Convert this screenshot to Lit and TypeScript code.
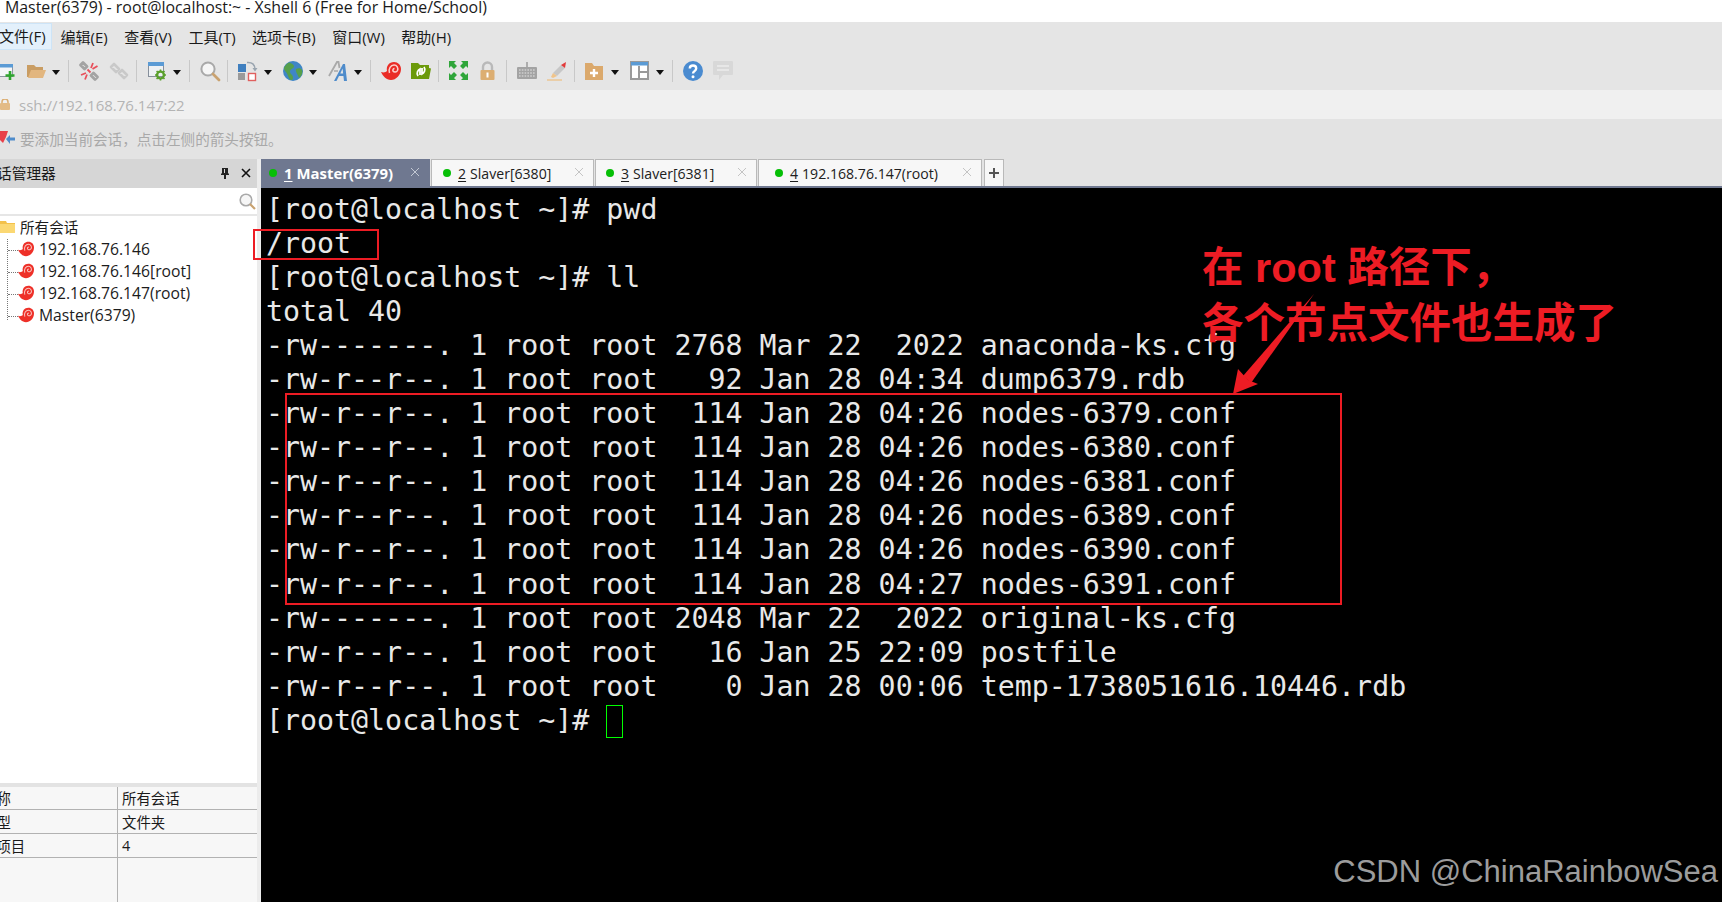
import { LitElement, html, css, svg } from "lit";
import { customElement } from "lit/decorators.js";

const SHELL_BODY = "M0 11c3 1 5 0 6-1C5 5 8 1 13 1c4 0 7 3 7 7 0 6-5 11-10 11C5 19 2 15 0 11z";
const SHELL_SPIRAL = "M8.500 12C7 7.500 10 4 13 4c3 0 4.500 3 3.500 5.500-1 2-3.500 2-4.500.5-.6-1.200.3-2.500 1.500-2.500";

const shellIcon = (size: number) => html`<svg width=${size} height=${size} viewBox="0 0 20 20">
  <path d=${SHELL_BODY} fill="#ee3028"/>
  <path d=${SHELL_SPIRAL} fill="none" stroke="#f9c5c0" stroke-width="1.300"/>
</svg>`;

const ICONS: Record<string, unknown> = {
  new: svg`<rect x="1.500" y="3.500" width="15" height="12" fill="#f4f6f8" stroke="#8d96a3"/><rect x="1" y="3" width="16" height="3.500" fill="#5b9bd5"/><path d="M14 10v9M9.500 14.500h9" stroke="#2fa52f" stroke-width="2.600"/>`,
  folder: svg`<path d="M1 4h7l2 2h7v3H6L4 16H1z" fill="#c99d63"/><path d="M5 9h15l-3 8H2z" fill="#e2b67f"/>`,
  broken: svg`<g fill="none" stroke="#a3a3a3" stroke-width="2.800" stroke-linejoin="round"><path d="M1.500 4l2.500-2.500 4 4L5.500 8z"/><path d="M12 14.500l2.500-2.500 4 4-2.500 2.500z"/></g><g stroke="#e8505b" stroke-width="1.800"><path d="M8.500 8.500l3 3M12 7l2-5M13.500 8l5-3M7 12l-5 2M8 13.500l-2 5"/></g>`,
  link: svg`<g fill="none" stroke="#c9c9c9" stroke-width="2.600" stroke-linejoin="round"><path d="M2 6l3-3 5 5-3 3z"/><path d="M10 12l3-3 5 5-3 3z"/></g>`,
  props: svg`<rect x="1.500" y="1.500" width="15" height="14" fill="#eef1f4" stroke="#868f9b"/><rect x="1" y="1" width="16" height="4" fill="#5b9bd5"/><circle cx="13.500" cy="14" r="3.400" fill="none" stroke="#5aa02c" stroke-width="2.400"/><path d="M13.500 8.500v2M13.500 17.500v2M8 14h2M17 14h2M9.600 10l1.500 1.500M16 16.500l1.500 1.500M9.600 18l1.500-1.500M16 11.500l1.500-1.500" stroke="#5aa02c" stroke-width="1.600"/>`,
  search: svg`<circle cx="8" cy="8" r="6.600" fill="#f6f6f6" stroke="#a9a9a9" stroke-width="2"/><path d="M13 13l6 6" stroke="#c9a270" stroke-width="2.800" stroke-linecap="round"/>`,
  arrange: svg`<rect x="0" y="3" width="8" height="8" fill="#3f7fbf"/><rect x="0" y="12" width="7" height="7" fill="#9a9a9a"/><rect x="10.500" y="12.500" width="7" height="7" fill="#fff" stroke="#e0605e" stroke-width="1.400"/><path d="M9 1.500c5-.5 8 2 8 7" fill="none" stroke="#9aa5b0" stroke-width="1.600"/><path d="M14.500 7l2.500 3.500L19.500 7z" fill="#9aa5b0"/>`,
  globe: svg`<circle cx="10" cy="10" r="10" fill="#3f86c6"/><path d="M6 1.500c3 1 5 2 5 4s-4 2-4 5 3 3 3 6-2 3-3 2-2-4-3-6-3-3-3-5 3-5 5-6zM13 8c2-1 5-1 6 1s0 6-3 8c-1-3-4-7-3-9z" fill="#56a04b"/>`,
  font: svg`<path d="M1 15L9 1h1.500l1 6" fill="none" stroke="#a9a9a9" stroke-width="1.800"/><path d="M6 10h4" stroke="#a9a9a9" stroke-width="1.500"/><path d="M6 20L15 3h2l2 17h-3l-.6-5H11l-2.500 5z" fill="#4f8ccb"/><path d="M12.300 12.500h2.800l-.5-5z" fill="#e5e5e5"/>`,
  xshell: svg`<path d=${SHELL_BODY} fill="#ea2c26"/><path d=${SHELL_SPIRAL} fill="none" stroke="#fbd0cc" stroke-width="1.500"/>`,
  xftp: svg`<path d="M0 2h7l2 2h9v3l2 .5L18 18H0z" fill="#6b9a0a"/><path d="M7 15c-2-3 0-6 2-7v6M13 6c2 3 0 6-2 7V7" fill="none" stroke="#fff" stroke-width="1.800"/>`,
  full: svg`<g fill="#2fa53a"><path d="M0 0h7L5 2l3 3-3 3-3-3-2 2zM19 0v7l-2-2-3 3-3-3 3-3-2-2zM0 19v-7l2 2 3-3 3 3-3 3 2 2zM19 19h-7l2-2-3-3 3-3 3 3 2-2z"/></g>`,
  lock: svg`<path d="M4 9V6a4.500 4.500 0 0 1 9 0v3" fill="none" stroke="#b9b9b9" stroke-width="2.400"/><rect x="1.500" y="9" width="14" height="10" rx="1" fill="#dcae72"/><rect x="7.500" y="11.500" width="2" height="5" fill="#fff"/>`,
  keyboard: svg`<path d="M10 1v5" stroke="#9a9a9a" stroke-width="1.500"/><rect x="0" y="6" width="20" height="12" rx="1" fill="#a3a3a3"/><path d="M2 9h16M2 12h16M2 15h16" stroke="#e6e6e6" stroke-width="1.100" stroke-dasharray="1.600 1.200"/>`,
  marker: svg`<path d="M6 12l8-8 4 3-8 8z" fill="#c7c7c7"/><path d="M14 4l5-3-1 6z" fill="#e23a3a"/><path d="M6 12l4 3-4 2-2-1z" fill="#f0c48a"/><path d="M0 19h15" stroke="#ecc58f" stroke-width="1.400"/>`,
  addfolder: svg`<path d="M0 2h7l2 3h9v14H0z" fill="#dba96c"/><path d="M9 8v8M5 12h8" stroke="#fff" stroke-width="2.400"/>`,
  layout: svg`<rect x="1" y="1" width="17" height="17" fill="#fff" stroke="#9a9a9a" stroke-width="2"/><rect x="1" y="1" width="17" height="3.500" fill="#5b9bd5"/><path d="M9 5v13M9 11h9" stroke="#9a9a9a" stroke-width="2"/>`,
  help: svg`<circle cx="10" cy="10" r="10" fill="#4a8bd0"/><path d="M6.800 7.500c0-4 6.400-4 6.400 0 0 2.600-3.200 2.600-3.200 5" fill="none" stroke="#fff" stroke-width="2.400"/><circle cx="10" cy="15.800" r="1.500" fill="#fff"/>`,
  chat: svg`<path d="M1 0h18a1 1 0 0 1 1 1v12a1 1 0 0 1-1 1h-9l-4 5v-5H1a1 1 0 0 1-1-1V1a1 1 0 0 1 1-1z" fill="#d8d8d8"/><path d="M4 5h12M4 9h12" stroke="#ececec" stroke-width="1.500"/>`,
};

type Tool = "sep" | "caret" | string;
const TOOLS: Tool[] = ["new", "folder", "caret", "sep", "broken", "link", "sep", "props", "caret", "sep", "search", "sep", "arrange", "caret", "globe", "caret", "font", "caret", "sep", "xshell", "xftp", "sep", "full", "lock", "sep", "keyboard", "marker", "sep", "addfolder", "caret", "layout", "caret", "sep", "help", "chat"];

const MENUS = ["编辑(E)", "查看(V)", "工具(T)", "选项卡(B)", "窗口(W)", "帮助(H)"];

const TREE = ["192.168.76.146", "192.168.76.146[root]", "192.168.76.147(root)", "Master(6379)"];

const HINT = "要添加当前会话\uFF0C点击左侧的箭头按钮。";
const NOTE_1 = "在 root 路径下\uFF0C";
const NOTE_2 = "各个节点文件也生成了";

const TABS = [
  { n: "2", t: "Slaver[6380]", w: 163, pad: 11 },
  { n: "3", t: "Slaver[6381]", w: 162, pad: 10 },
  { n: "4", t: "192.168.76.147(root)", w: 224, pad: 16 },
];

const LINES = [
  "[root@localhost ~]# pwd",
  "/root",
  "[root@localhost ~]# ll",
  "total 40",
  "-rw-------. 1 root root 2768 Mar 22  2022 anaconda-ks.cfg",
  "-rw-r--r--. 1 root root   92 Jan 28 04:34 dump6379.rdb",
  "-rw-r--r--. 1 root root  114 Jan 28 04:26 nodes-6379.conf",
  "-rw-r--r--. 1 root root  114 Jan 28 04:26 nodes-6380.conf",
  "-rw-r--r--. 1 root root  114 Jan 28 04:26 nodes-6381.conf",
  "-rw-r--r--. 1 root root  114 Jan 28 04:26 nodes-6389.conf",
  "-rw-r--r--. 1 root root  114 Jan 28 04:26 nodes-6390.conf",
  "-rw-r--r--. 1 root root  114 Jan 28 04:27 nodes-6391.conf",
  "-rw-------. 1 root root 2048 Mar 22  2022 original-ks.cfg",
  "-rw-r--r--. 1 root root   16 Jan 25 22:09 postfile",
  "-rw-r--r--. 1 root root    0 Jan 28 00:06 temp-1738051616.10446.rdb",
];

@customElement("app-root")
export class AppRoot extends LitElement {
  static styles = css`
    :host {
      display: block;
      width: 1722px;
      height: 902px;
      overflow: hidden;
      font-family: "Open Sans", "Noto Sans CJK SC", sans-serif;
      color: #1a1a1a;
    }
    .app { display: flex; flex-direction: column; height: 902px; background: #e3e3e3; }
    .title { height: 22px; flex: none; background: #fff; padding-left: 5px; font-size: 15.9px; line-height: 14px; white-space: nowrap; }
    .menu { height: 30px; flex: none; display: flex; align-items: center; font-size: 15px; gap: 16.5px; background: #e5e5e5; padding-bottom: 1px; box-sizing: border-box; }
    .menu span { white-space: nowrap; }
    .menu .on { background: #e3f0fb; border: 1px solid #cde4f7; border-left: 0; width: 52px; height: 27px; line-height: 24px; box-sizing: border-box; margin-right: -8px; text-indent: -1px; }
    .tools { height: 38px; flex: none; display: flex; align-items: center; margin-left: -4px; background: #e5e5e5; }
    .ti { width: 20px; height: 20px; margin-right: 10px; flex: none; display: block; overflow: visible; }
    .caret { width: 0; height: 0; flex: none; border: 4px solid transparent; border-top: 5px solid #111; border-bottom: 0; margin: 2px 11px 0 -4px; }
    .sep { width: 1px; height: 22px; flex: none; background: #c8c8c8; margin: 0 10px 0 -3px; }
    .addr { height: 29px; flex: none; background: #f0f0f0; display: flex; align-items: center; color: #b4b4b4; font-size: 15px; gap: 9px; }
    .hint { height: 40px; flex: none; background: #e3e3e3; display: flex; align-items: center; color: #a9a9a9; font-size: 14.6px; gap: 4px; padding-bottom: 2px; box-sizing: border-box; }
    .main { flex: 1; display: flex; min-height: 0; }
    .side { width: 257px; flex: none; display: flex; flex-direction: column; background: #fff; }
    .gutter { width: 4px; flex: none; background: #ececec; }
    .side-h { height: 29px; flex: none; background: #d6d6d6; display: flex; align-items: center; font-size: 14.7px; white-space: nowrap; padding: 0 6px 2px 0; box-sizing: border-box; }
    .side-h .name { flex: 1; margin-left: -3px; }
    .side-h svg { flex: none; margin-left: 11px; }
    .side-s { height: 26px; flex: none; border-bottom: 2px solid #e6e6e6; display: flex; justify-content: flex-end; align-items: center; padding-right: 1px; }
    .tree { flex: 1; font-size: 15.7px; line-height: 22px; position: relative; }
    .row { height: 22px; display: flex; align-items: center; white-space: nowrap; color: #1c1c1c; }
    .row.root { gap: 5px; font-size: 14.6px; }
    .row.kid { padding-left: 18px; gap: 5px; }
    .tree-line { position: absolute; left: 7px; top: 23px; width: 10px; height: 81px; border-left: 1px dotted #777; }
    .tick { position: absolute; left: 0; width: 10px; border-top: 1px dotted #777; }
    .grab { height: 4px; flex: none; background: #e3e3e3; }
    .props { height: 115px; flex: none; background: #f7f7f7; display: grid; grid-template-columns: 118px 1fr; grid-template-rows: 23px 24px 24px 1fr; font-size: 14.4px; }
    .props div { border-bottom: 1px solid #b2b2b2; display: flex; align-items: center; white-space: nowrap; box-sizing: border-box; padding-bottom: 1px; }
    .props .l { border-right: 1px solid #b2b2b2; overflow: hidden; }
    .props .l span { margin-left: -18px; }
    .props .v { padding-left: 4px; }
    .props .e { border-bottom: 0; }
    .right { flex: 1; display: flex; flex-direction: column; min-width: 0; }
    .tabs { height: 29px; flex: none; display: flex; align-items: flex-start; background: #e3e3e3; font-size: 14.1px; border-bottom: 2px solid #6f7890; box-sizing: border-box; }
    .tab { height: 27px; box-sizing: border-box; flex: none; display: flex; align-items: center; background: #f7f7f7; border: 1px solid #b9b9b9; border-width: 1px 1px 0 1px; white-space: nowrap; margin-right: 1px; position: relative; color: #202020; }
    .tab.active { width: 169px; background: #6f7890; border-color: #6f7890; color: #fff; font-weight: 700; font-size: 14.9px; padding-left: 7px; }
    .dot { width: 8px; height: 8px; border-radius: 50%; background: #06bf06; margin-right: 7px; flex: none; }
    .tab u { text-underline-offset: 2px; margin-right: 4px; }
    .x { position: absolute; right: 9px; top: 7px; width: 10px; height: 10px; }
    .plus { width: 20px; height: 27px; box-sizing: border-box; background: #f7f7f7; border: 1px solid #b9b9b9; border-bottom: 0; display: flex; align-items: center; justify-content: center; margin-left: 1px; }
    .term { flex: 1; background: #000; position: relative; padding: 5px 0 0 5px; color: #e8e8e8; font-family: "DejaVu Sans Mono", monospace; font-size: 28.28px; line-height: 34.05px; }
    .line { height: 34.05px; white-space: pre; }
    .cursor { display: inline-block; width: 17px; height: 33px; box-sizing: border-box; border: 1px solid #00ff00; vertical-align: top; margin-top: 1px; }
    .box { position: absolute; border: 2px solid #ed1c24; box-sizing: border-box; }
    .b1 { left: -8px; top: 41px; width: 126px; height: 31px; }
    .b2 { left: 24px; top: 205px; width: 1057px; height: 212px; }
    .note { position: absolute; left: 941px; top: 52px; color: #ed1c24; font-family: "Liberation Sans", "Noto Sans CJK SC", sans-serif; font-weight: 700; font-size: 41.5px; line-height: 56px; white-space: nowrap; }
    .arrow { position: absolute; left: 0; top: 0; width: 1461px; height: 714px; pointer-events: none; }
    .mark { position: absolute; right: 4px; bottom: 11px; color: #9c9c9c; font-family: "Liberation Sans", sans-serif; font-size: 31px; line-height: 38px; white-space: nowrap; }
  `;

  private closeX(color: string) {
    return html`<svg class="x" viewBox="0 0 10 10"><path d="M1 1l8 8M9 1l-8 8" stroke=${color} stroke-width="1"/></svg>`;
  }

  private tool(t: Tool) {
    if (t === "sep") return html`<i class="sep"></i>`;
    if (t === "caret") return html`<i class="caret"></i>`;
    return html`<svg class="ti" viewBox="0 0 20 20">${ICONS[t]}</svg>`;
  }

  render() {
    return html`<div class="app">
      <div class="title">Master(6379) - root@localhost:~ - Xshell 6 (Free for Home/School)</div>
      <div class="menu"><span class="on">文件(F)</span>${MENUS.map((m) => html`<span>${m}</span>`)}</div>
      <div class="tools">${TOOLS.map((t) => this.tool(t))}</div>
      <div class="addr">
        <svg width="10" height="11" viewBox="0 0 10 11"><path d="M2 5V3a3 3 0 0 1 6 0v2" fill="none" stroke="#dcae72" stroke-width="1.500"/><rect x="0" y="4" width="10" height="7" rx="1" fill="#e3bb86"/></svg>
        <span>ssh://192.168.76.147:22</span>
      </div>
      <div class="hint">
        <svg width="16" height="16" viewBox="0 0 16 16"><path d="M0 1h8l-2 6-3 6-3-3z" fill="#e8404a"/><path d="M6 9l4-4v2.500h5v3h-5V14z" fill="#4f8ccb"/></svg>
        <span>${HINT}</span>
      </div>
      <div class="main">
        <div class="side">
          <div class="side-h">
            <span class="name">话管理器</span>
            <svg width="10" height="12" viewBox="0 0 10 12"><path d="M2 1h6v5l1 1v1H6v4H4V8H1V7l1-1z M4 2v4h1V2z" fill="#222" fill-rule="evenodd"/></svg>
            <svg width="10" height="10" viewBox="0 0 10 10"><path d="M1 1l8 8M9 1l-8 8" stroke="#111" stroke-width="1.600"/></svg>
          </div>
          <div class="side-s">
            <svg width="17" height="17" viewBox="0 0 17 17"><circle cx="7" cy="7" r="5.800" fill="#f6f6f6" stroke="#a9a9a9" stroke-width="1.600"/><path d="M11 11l5 5" stroke="#c9a270" stroke-width="2.200"/></svg>
          </div>
          <div class="tree">
            <div class="tree-line">
              <i class="tick" style="top:11px"></i><i class="tick" style="top:33px"></i><i class="tick" style="top:55px"></i><i class="tick" style="top:77px"></i>
            </div>
            <div class="row root">
              <svg width="15" height="12" viewBox="0 0 15 12"><path d="M0 0h6l1 2h8v10H0z" fill="#f3c14b"/><path d="M0 3h15v9H0z" fill="#fbd873"/></svg>
              <span>所有会话</span>
            </div>
            ${TREE.map((t) => html`<div class="row kid">${shellIcon(16)}<span>${t}</span></div>`)}
          </div>
          <div class="grab"></div>
          <div class="props">
            <div class="l"><span>名称</span></div><div class="v">所有会话</div>
            <div class="l"><span>类型</span></div><div class="v">文件夹</div>
            <div class="l"><span>子项目</span></div><div class="v">4</div>
            <div class="l e"></div><div class="v e"></div>
          </div>
        </div>
        <div class="gutter"></div>
        <div class="right">
          <div class="tabs">
            <div class="tab active"><i class="dot"></i><u>1</u>Master(6379)${this.closeX("#c3c8d3")}</div>
            ${TABS.map((t) => html`<div class="tab" style="width:${t.w}px;padding-left:${t.pad}px"><i class="dot"></i><u>${t.n}</u>${t.t}${this.closeX("#c4c4c4")}</div>`)}
            <div class="plus"><svg width="12" height="12" viewBox="0 0 12 12"><path d="M6 1v10M1 6h10" stroke="#555" stroke-width="2"/></svg></div>
          </div>
          <div class="term">
            ${LINES.map((l) => html`<div class="line">${l}</div>`)}
            <div class="line">[root@localhost ~]# <span class="cursor"></span></div>
            <div class="box b1"></div>
            <div class="box b2"></div>
            <div class="note">${NOTE_1}<br />${NOTE_2}</div>
            <svg class="arrow" viewBox="0 0 1461 714">
              <path d="M1053 106L990 195L982 188z" fill="#ed1c24"/>
              <path d="M972 206L977 181L987 192L997 196z" fill="#ed1c24"/>
            </svg>
            <div class="mark">CSDN @ChinaRainbowSea</div>
          </div>
        </div>
      </div>
    </div>`;
  }
}
